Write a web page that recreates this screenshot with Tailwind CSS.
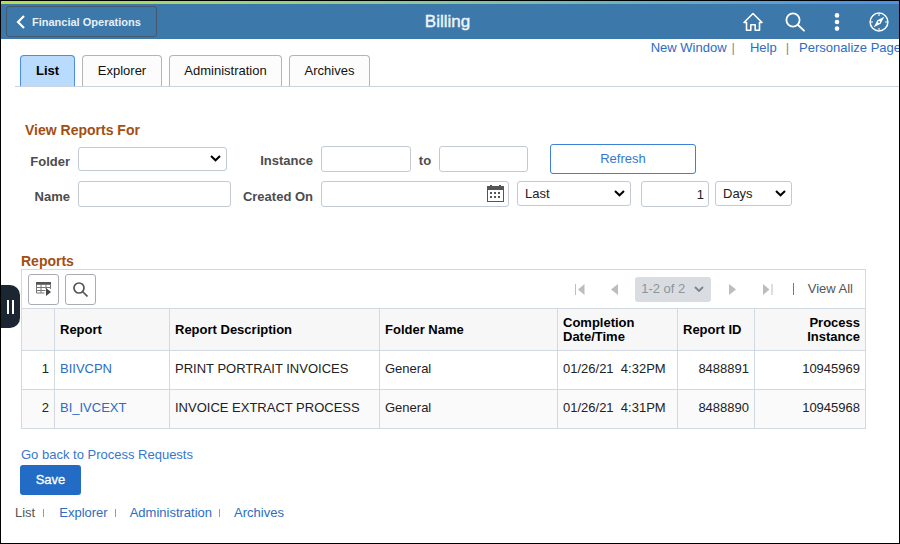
<!DOCTYPE html>
<html lang="en">
  <head>
    <meta charset="UTF-8" />
    <meta name="viewport" content="width=device-width, initial-scale=1.0" />
    <title>Billing</title>

    <!-- TailwindCSS -->
    <script src="https://cdn.jsdelivr.net/npm/@tailwindcss/browser@4"></script>
  </head>

  <body class="relative min-h-screen overflow-x-hidden border border-black bg-white font-['Liberation_Sans',Arial,sans-serif] text-[13px] leading-4 text-[#222]">
    <!-- HEADER -->
    <div class="h-[3px] bg-linear-to-r from-[#b5e04a] via-[#85c6a0] to-[#4a8fe8]"></div>
    <header class="grid h-[35px] grid-cols-[1fr_auto_1fr] items-center bg-[#3c79aa] pr-[10px] pl-[5px] text-white">
      <button class="flex h-[31px] w-[151px] items-center gap-[7px] rounded-[3px] border border-[#46596c] pl-[9px] text-[11px] font-bold text-[#e6f0f8]">
        <svg class="h-[14px] w-[9px]" viewBox="0 0 9 14" fill="none" stroke="white" stroke-width="2.2"><path d="M8 1 2 7l6 6" /></svg>
        Financial Operations
      </button>
      <h1 class="text-[17px] leading-5 text-[#eef5fa] [-webkit-text-stroke:0.4px_#eef5fa]">Billing</h1>
      <nav class="flex items-center justify-end">
        <button aria-label="Home" class="mr-[22px]">
          <svg class="size-5" viewBox="0 0 20 20" fill="none" stroke="white" stroke-width="1.6" stroke-linejoin="round" stroke-linecap="round"><path d="m1 10.500 9-9 9 9h-2.500v7.700h-4.300v-5.400H7.800v5.400H3.500v-7.700z" /></svg>
        </button>
        <button aria-label="Search" class="mr-[22px]">
          <svg class="size-5" viewBox="0 0 20 20" fill="none" stroke="white" stroke-width="1.8" stroke-linecap="round"><circle cx="8" cy="8" r="6.600" /><path d="m13 13 6 5.700" /></svg>
        </button>
        <button aria-label="Actions" class="mr-[22px]">
          <svg class="size-5" viewBox="0 0 20 20" fill="white"><circle cx="10" cy="3.400" r="2.300" /><circle cx="10" cy="10" r="2.300" /><circle cx="10" cy="16.600" r="2.300" /></svg>
        </button>
        <button aria-label="NavBar">
          <svg class="size-5" viewBox="0 0 20 20" fill="none" stroke="white" stroke-width="1.5"><circle cx="10" cy="10" r="8.900" /><path d="M10 2v2M10 16v2M2 10h2M16 10h2" stroke-width="1.1" /><path d="m15.300 4.700-3.700 7.100-6.900 3.500 3.700-7.100z" fill="white" stroke="none" /><circle cx="10" cy="10" r="1" fill="#3c79aa" stroke="none" /></svg>
        </button>
      </nav>
    </header>

    <div class="flex h-4 items-start justify-end leading-[18px] text-[#2c6cc4]">
      <a href="#" class="hover:underline">New Window</a>
      <span class="mr-[15px] ml-[5px] text-[#8a8a8a]">|</span>
      <a href="#" class="hover:underline">Help</a>
      <span class="mr-[10px] ml-[9px] text-[#8a8a8a]">|</span>
      <a href="#" class="-mr-[2px] hover:underline">Personalize Page</a>
    </div>

    <!-- TABS -->
    <div class="ml-[14px] flex h-8 gap-[7px] border-b border-[#ccd3dc] pl-[5px] text-[#111]">
      <button class="h-[31px] w-[55px] rounded-t border border-b-0 border-[#4a8ee0] bg-[#b9dbfd] font-bold text-black">List</button>
      <button class="h-[31px] w-20 rounded-t border border-b-0 border-[#b4b4b4] bg-[#fcfcfc]">Explorer</button>
      <button class="h-[31px] w-[113px] rounded-t border border-b-0 border-[#b4b4b4] bg-[#fcfcfc]">Administration</button>
      <button class="h-[31px] w-[81px] rounded-t border border-b-0 border-[#b4b4b4] bg-[#fcfcfc]">Archives</button>
    </div>

    <main class="pr-[33px] pl-5">
      <!-- FILTERS -->
      <form class="pt-[35px] font-bold text-[#4c4c4c]">
        <h2 class="pl-1 text-sm leading-4 text-[#a34e12]">View Reports For</h2>
        <div class="mt-[6px] flex h-[30px] items-center">
          <label for="folder" class="w-[49px] pt-[6px] text-right">Folder</label>
          <div class="relative ml-2">
            <select id="folder" class="block h-6 w-[149px] appearance-none rounded-[3px] border border-[#c3cad3] bg-white"><option></option></select>
            <svg class="pointer-events-none absolute top-2 right-[6px] h-[7px] w-[11px]" viewBox="0 0 11 7" fill="none" stroke="black" stroke-width="2"><path d="m1 1 4.500 4.300L10 1" /></svg>
          </div>
          <label for="instanceFrom" class="w-[86px] pt-1 text-right">Instance</label>
          <input id="instanceFrom" type="text" class="ml-2 h-[26px] w-[90px] rounded-[3px] border border-[#c3cad3] px-1 font-normal" />
          <label for="instanceTo" class="w-[28px] pt-1 text-center">to</label>
          <input id="instanceTo" type="text" class="h-[26px] w-[89px] rounded-[3px] border border-[#c3cad3] px-1 font-normal" />
          <button type="button" class="ml-[22px] h-[30px] w-[146px] rounded-[3px] border border-[#3c80d8] bg-white font-normal text-[#3577cf]">Refresh</button>
        </div>
        <div class="mt-[7px] flex h-[26px] items-start">
          <label for="name" class="w-[49px] pt-2 text-right">Name</label>
          <input id="name" type="text" class="ml-2 h-[26px] w-[153px] rounded-[3px] border border-[#c3cad3] px-1 font-normal" />
          <label for="createdOn" class="w-[82px] pt-2 text-right">Created On</label>
          <div class="relative ml-2">
            <input id="createdOn" type="text" class="h-[26px] w-[188px] rounded-[3px] border border-[#c3cad3] px-1 font-normal" />
            <button type="button" aria-label="Choose a date" class="absolute top-1 right-[5px]">
              <svg class="h-[17px] w-[17px]" viewBox="0 0 17 17" fill="#555"><path d="M0 1h3V0h2v1h7V0h2v1h3v16H0zm1 4v11h15V5z" fill-rule="evenodd" /><path d="M3 7h2v2H3zm4 0h2v2H7zm4 0h2v2h-2zM3 11h2v2H3zm4 0h2v2H7zm4 0h2v2h-2z" /></svg>
            </button>
          </div>
          <div class="relative ml-2">
            <select aria-label="Date range" class="block h-[25px] w-[114px] appearance-none rounded-[3px] border border-[#c3cad3] bg-white pl-[7px] font-normal text-[#222]"><option>Last</option></select>
            <svg class="pointer-events-none absolute top-[9px] right-[6px] h-[7px] w-[11px]" viewBox="0 0 11 7" fill="none" stroke="black" stroke-width="2"><path d="m1 1 4.500 4.300L10 1" /></svg>
          </div>
          <input aria-label="Number of days" type="text" value="1" class="ml-[10px] h-[26px] w-[68px] rounded-[3px] border border-[#c3cad3] px-1 text-right font-normal text-[#222]" />
          <div class="relative ml-[6px]">
            <select aria-label="Unit" class="block h-[25px] w-[77px] appearance-none rounded-[3px] border border-[#c3cad3] bg-white pl-[7px] font-normal text-[#222]"><option>Days</option></select>
            <svg class="pointer-events-none absolute top-[9px] right-[6px] h-[7px] w-[11px]" viewBox="0 0 11 7" fill="none" stroke="black" stroke-width="2"><path d="m1 1 4.500 4.300L10 1" /></svg>
          </div>
        </div>
      </form>

      <!-- REPORTS -->
      <section class="mt-[46px]">
        <h2 class="text-sm leading-4 font-bold text-[#a34e12]">Reports</h2>
        <div class="flex h-[39px] items-center justify-between border border-b-0 border-[#d3d9e0] pr-3 pl-[6px]">
          <div class="flex gap-[6px]">
            <button aria-label="Grid actions" class="flex size-[31px] items-center justify-center rounded-[3px] border border-[#a9adb3] bg-white">
              <svg class="h-[14px] w-[15px]" viewBox="0 0 15 14"><path d="M0 0h15v3H0z" fill="#555" /><path d="M.5 2.500h14V7M.5 2.500v8.500h8M.5 5.500h14M.5 8.500h9M5 3v8M10 3v4" fill="none" stroke="#777" /><path d="m10 6 5 4-5 4z" fill="#444" /></svg>
            </button>
            <button aria-label="Find" class="flex size-[31px] items-center justify-center rounded-[3px] border border-[#a9adb3] bg-white">
              <svg class="size-[15px]" viewBox="0 0 15 15" fill="none" stroke="#555" stroke-width="1.7"><circle cx="6" cy="6" r="5" /><path d="m9.500 9.500 5 5" /></svg>
            </button>
          </div>
          <div class="flex items-center text-[#555]">
            <button aria-label="First page" class="mr-[26px]"><svg class="h-[11px] w-[10px]" viewBox="0 0 10 11" fill="#bdbdbd"><path d="M0 0h1v11H0zM9.500 0v11L3 5.500z" /></svg></button>
            <button aria-label="Previous page" class="mr-[17px]"><svg class="h-[11px] w-[7px]" viewBox="0 0 7 11" fill="#bdbdbd"><path d="M7 0v11L0 5.500z" /></svg></button>
            <button class="flex h-[25px] w-[76px] items-center justify-center gap-[9px] rounded-[3px] bg-[#d9dde2] text-[#8f9499]">
              1-2 of 2
              <svg class="h-[6px] w-[10px]" viewBox="0 0 10 6" fill="none" stroke="#7d8388" stroke-width="1.8"><path d="m1 1 4 4 4-4" /></svg>
            </button>
            <button aria-label="Next page" class="ml-[18px]"><svg class="h-[11px] w-[7px]" viewBox="0 0 7 11" fill="#bdbdbd"><path d="M0 0v11l7-5.500z" /></svg></button>
            <button aria-label="Last page" class="ml-[27px]"><svg class="h-[11px] w-[10px]" viewBox="0 0 10 11" fill="#bdbdbd"><path d="M8.500 0h1v11h-1zM0 0v11l6.500-5.500z" /></svg></button>
            <span class="ml-[20px] h-3 w-px bg-[#777]"></span>
            <a href="#" class="ml-[14px] hover:underline">View All</a>
          </div>
        </div>
        <table class="w-full table-fixed border-collapse border border-[#d3d9e0] border-b-[#c3cad3]">
          <colgroup>
            <col class="w-[33px]" />
            <col class="w-[115px]" />
            <col class="w-[210px]" />
            <col class="w-[178px]" />
            <col class="w-[120px]" />
            <col class="w-[77px]" />
            <col />
          </colgroup>
          <thead>
            <tr class="h-[42px] bg-[#f7f7f7] text-left leading-[14px] text-black">
              <th class="border border-[#d3d9e0]"></th>
              <th class="border border-[#d3d9e0] px-[5px]">Report</th>
              <th class="border border-[#d3d9e0] px-[5px]">Report Description</th>
              <th class="border border-[#d3d9e0] px-[5px]">Folder Name</th>
              <th class="border border-[#d3d9e0] px-[5px]">Completion<br />Date/Time</th>
              <th class="border border-[#d3d9e0] px-[5px]">Report ID</th>
              <th class="border border-[#d3d9e0] px-[5px] text-right">Process<br />Instance</th>
            </tr>
          </thead>
          <tbody>
            <tr class="h-[39px]">
              <td class="border border-[#d3d9e0] px-[5px] pb-[2px] text-right">1</td>
              <td class="border border-[#d3d9e0] px-[5px] pb-[2px]"><a href="#" class="text-[#2c6cc4] hover:underline">BIIVCPN</a></td>
              <td class="border border-[#d3d9e0] px-[5px] pb-[2px]">PRINT PORTRAIT INVOICES</td>
              <td class="border border-[#d3d9e0] px-[5px] pb-[2px]">General</td>
              <td class="border border-[#d3d9e0] px-[5px] pb-[2px] whitespace-pre">01/26/21  4:32PM</td>
              <td class="border border-[#d3d9e0] px-[5px] pb-[2px] text-right">8488891</td>
              <td class="border border-[#d3d9e0] px-[5px] pb-[2px] text-right">10945969</td>
            </tr>
            <tr class="h-[39px] bg-[#fafafa]">
              <td class="border border-[#d3d9e0] px-[5px] pb-[2px] text-right">2</td>
              <td class="border border-[#d3d9e0] px-[5px] pb-[2px]"><a href="#" class="text-[#2c6cc4] hover:underline">BI_IVCEXT</a></td>
              <td class="border border-[#d3d9e0] px-[5px] pb-[2px]">INVOICE EXTRACT PROCESS</td>
              <td class="border border-[#d3d9e0] px-[5px] pb-[2px]">General</td>
              <td class="border border-[#d3d9e0] px-[5px] pb-[2px] whitespace-pre">01/26/21  4:31PM</td>
              <td class="border border-[#d3d9e0] px-[5px] pb-[2px] text-right">8488890</td>
              <td class="border border-[#d3d9e0] px-[5px] pb-[2px] text-right">10945968</td>
            </tr>
          </tbody>
        </table>
      </section>
    </main>

    <!-- FOOTER -->
    <footer class="px-[14px] pt-[18px]">
      <a href="#" class="ml-[6px] block w-fit text-[#3577cf] hover:underline">Go back to Process Requests</a>
      <button class="mt-[2px] ml-[5px] block h-[30px] w-[61px] rounded-[3px] bg-[#226cc5] text-white [-webkit-text-stroke:0.3px_white]">Save</button>
      <nav class="mt-[10px] flex items-center text-[#2c6cc4]">
        <span class="text-[#555]">List</span>
        <span class="mx-2 h-2 w-px bg-[#999]"></span>
        <a href="#" class="ml-[7px] hover:underline">Explorer</a>
        <span class="mx-[7px] h-2 w-px bg-[#999]"></span>
        <a href="#" class="ml-[7px] hover:underline">Administration</a>
        <span class="mx-[7px] h-2 w-px bg-[#999]"></span>
        <a href="#" class="ml-[7px] hover:underline">Archives</a>
      </nav>
    </footer>

    <!-- side panel handle -->
    <button aria-label="Open side panel" class="absolute top-[284px] left-0 flex h-[43px] w-[19px] items-center justify-center gap-[3px] rounded-r-[10px] bg-[#1c2632]">
      <span class="h-[14px] w-[2px] bg-white"></span>
      <span class="h-[14px] w-[2px] bg-white"></span>
    </button>
  </body>
</html>
